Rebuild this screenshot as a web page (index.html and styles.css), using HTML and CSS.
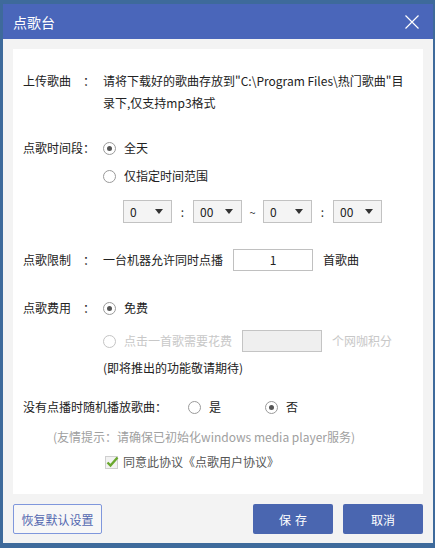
FILE: index.html
```html
<!DOCTYPE html>
<html lang="zh-CN">
<head>
  <meta charset="UTF-8">
  <title>点歌台</title>
  <link rel="stylesheet" href="styles.css">
</head>
<body>
<div class="dialog">
  <div class="dialog-head">
    <span class="dialog-title">点歌台</span>
    <svg class="close-icon" width="14" height="14" viewBox="0 0 14 14">
      <path d="M0.5 0.5 L13.5 13.5 M13.5 0.5 L0.5 13.5" stroke="#fff" stroke-width="1.2" fill="none"/>
    </svg>
  </div>

  <div class="dialog-body">
    <div class="panel">
      <div class="row row-upload">
        <div class="label"><span class="name">上传歌曲</span><span class="colon">：</span></div>
        <div class="value">请将下载好的歌曲存放到"C:\Program Files\热门歌曲"目录下,仅支持mp3格式</div>
      </div>

      <div class="row row-time">
        <div class="label"><span class="name">点歌时间段</span><span class="colon">：</span></div>
        <div class="value">
          <div class="option"><span class="radio checked"></span>全天</div>
          <div class="option"><span class="radio"></span>仅指定时间范围</div>
          <div class="time-range">
            <div class="select"><span>0</span><i class="arrow"></i></div>
            <span class="sep">:</span>
            <div class="select"><span>00</span><i class="arrow"></i></div>
            <span class="sep tilde">~</span>
            <div class="select"><span>0</span><i class="arrow"></i></div>
            <span class="sep">:</span>
            <div class="select"><span>00</span><i class="arrow"></i></div>
          </div>
        </div>
      </div>

      <div class="row row-limit">
        <div class="label"><span class="name">点歌限制</span><span class="colon">：</span></div>
        <div class="value inline">
          一台机器允许同时点播
          <div class="num-box">1</div>
          首歌曲
        </div>
      </div>

      <div class="row row-fee">
        <div class="label"><span class="name">点歌费用</span><span class="colon">：</span></div>
        <div class="value">
          <div class="option"><span class="radio checked"></span>免费</div>
          <div class="option disabled"><span class="radio"></span>点击一首歌需要花费<div class="num-box off"></div>个网咖积分</div>
          <div class="note">(即将推出的功能敬请期待)</div>
        </div>
      </div>

      <div class="row row-random">
        <span class="long-label">没有点播时随机播放歌曲：</span>
        <span class="radio first"></span>是
        <span class="radio checked second"></span>否
      </div>

      <div class="hint">(友情提示：请确保已初始化windows media player服务)</div>

      <div class="agree">
        <svg class="check" width="14" height="14" viewBox="0 0 14 14">
          <rect x="0.5" y="1.5" width="12" height="12" fill="#f2f2f2" stroke="#cfcfcf"/>
          <path d="M2.5 7.5 L5.5 10.5 L12.5 2.5" stroke="#6aa82e" stroke-width="2.4" fill="none"/>
        </svg>
        同意此协议《点歌用户协议》
      </div>
    </div>

    <div class="footer">
      <button class="btn-reset">恢复默认设置</button>
      <div class="footer-right">
        <button class="btn-main spaced">保存</button>
        <button class="btn-main">取消</button>
      </div>
    </div>
  </div>
</div>
</body>
</html>
```

FILE: styles.css
```css
body {
  margin: 0;
  background-color: #3e6a9b;
  font-family: "Noto Sans CJK SC", "Microsoft YaHei", sans-serif;
  font-size: 12px;
  color: #222;
}

.dialog {
  width: 430px;
  height: 539px;
  margin: 4px 0 0 3px;
  background-color: #f3f3f3;
  display: flex;
  flex-direction: column;
}

.dialog-head {
  height: 35px;
  background-color: #4a66ba;
  display: flex;
  align-items: center;
  justify-content: space-between;
  padding: 0 14px 0 10px;
}

.dialog-title {
  color: #fff;
  font-size: 14px;
}

.dialog-body {
  padding: 10px 10px 0 10px;
}

.panel {
  background-color: #fff;
  height: 445px;
  box-sizing: border-box;
  padding: 21px 10px 0 10px;
}

.row {
  display: flex;
}

.label {
  width: 80px;
  flex-shrink: 0;
  display: flex;
  line-height: 22px;
}

.label .name {
  width: 60px;
}

.value {
  flex: 1;
  line-height: 22px;
}

.row-time {
  margin-top: 20px;
}

.row-time .label {
  padding-top: 3px;
}

.option {
  display: flex;
  align-items: center;
  height: 28px;
}

.radio {
  width: 11px;
  height: 11px;
  border: 1px solid #9a9a9a;
  border-radius: 50%;
  background-color: #fff;
  margin-right: 8px;
  position: relative;
  flex-shrink: 0;
  display: inline-block;
  box-sizing: content-box;
}

.radio.checked::after {
  content: "";
  position: absolute;
  left: 3px;
  top: 3px;
  width: 5px;
  height: 5px;
  border-radius: 50%;
  background-color: #555;
}

.time-range {
  display: flex;
  align-items: center;
  margin: 10px 0 0 20px;
}

.select {
  width: 49px;
  height: 23px;
  border: 1px solid #c2c2c2;
  background-color: #f4f4f4;
  display: flex;
  align-items: center;
  justify-content: space-between;
  padding: 0 8px 0 6px;
  box-sizing: border-box;
}

.arrow {
  width: 0;
  height: 0;
  border-left: 4px solid transparent;
  border-right: 4px solid transparent;
  border-top: 5px solid #333;
}

.sep {
  width: 21px;
  text-align: center;
  color: #333;
}

.tilde {
  font-size: 11px;
}

.row-limit {
  margin-top: 26px;
}

.inline {
  display: flex;
  align-items: center;
}

.num-box {
  width: 80px;
  height: 22px;
  box-sizing: border-box;
  border: 1px solid #c0c0c0;
  text-align: center;
  line-height: 20px;
  margin: 0 10px 0 10px;
}

.row-fee {
  margin-top: 23px;
}

.row-fee .label {
  padding-top: 3px;
}

.option.disabled {
  color: #c8c8c8;
  height: 22px;
  margin-top: 8px;
}

.option.disabled .radio {
  border-color: #c4c4c4;
}

.num-box.off {
  background-color: #efefef;
  border-color: #c4c4c4;
}

.note {
  margin-top: 5px;
}

.row-random {
  margin-top: 17px;
  align-items: center;
  line-height: 22px;
}

.long-label {
  width: 165px;
}

.radio.second {
  margin-left: 44px;
}

.hint {
  margin: 8px 0 0 30px;
  line-height: 22px;
  color: #a0a0a0;
}

.agree {
  margin: 3px 0 0 82px;
  display: flex;
  align-items: center;
  line-height: 22px;
  color: #555;
}

.check {
  margin-right: 4px;
}

.footer {
  display: flex;
  justify-content: space-between;
  margin-top: 10px;
}

.footer-right {
  display: flex;
  gap: 10px;
}

button {
  font-family: inherit;
  font-size: 12px;
  height: 30px;
  border-radius: 2px;
  cursor: pointer;
}

.btn-reset {
  width: 89px;
  background-color: #f7f7f7;
  border: 1px solid #7f97dc;
  color: #5468b0;
}

.btn-main {
  width: 80px;
  background-color: #4a66b0;
  border: none;
  color: #fff;
}

.btn-main.spaced {
  letter-spacing: 4px;
  text-indent: 4px;
}
```
